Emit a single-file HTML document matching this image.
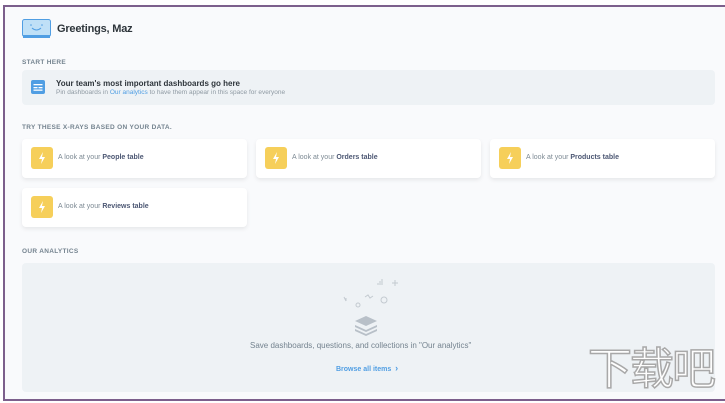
<!DOCTYPE html>
<html><head><meta charset="utf-8"><style>
*{margin:0;padding:0;box-sizing:border-box}
body{width:725px;height:403px;overflow:hidden;background:#fff;font-family:"Liberation Sans",sans-serif;position:relative}
.frame{position:absolute;left:3px;top:5px;width:730px;height:396px;border:2px solid #7c5f8c;border-right:none;background:#f9fafc}
.abs{position:absolute}
.lbl{position:absolute;left:22px;font-size:6.5px;font-weight:bold;color:#74838f;letter-spacing:.3px}
.card{position:absolute;width:225px;height:39px;background:#fff;border-radius:4px;box-shadow:0 2px 4px rgba(0,0,0,.08)}
.card .ic{position:absolute;left:9px;top:8px;width:22px;height:22px;background:#f6cf5a;border-radius:3px}
.card .ic svg{position:absolute;left:7px;top:5px}
.card .t{position:absolute;left:36px;top:15px;font-size:7px;color:#7d8a94}
.card .t b{color:#4c5773;font-weight:bold}
</style></head><body>
<div class="frame"></div>
<svg class="abs" style="left:22px;top:19px" width="29" height="20" viewBox="0 0 29 20"><rect x="0.5" y="0.5" width="28" height="17" rx="2" fill="#bfe0f7" stroke="#509ee3"/><rect x="1" y="16" width="27" height="3" fill="#509ee3"/><path d="M10 9 q4.5 4 9 0" stroke="#509ee3" fill="none" stroke-width="1"/><circle cx="9" cy="6" r=".8" fill="#509ee3"/><circle cx="20" cy="6" r=".8" fill="#509ee3"/></svg>
<div class="abs" style="left:57px;top:23px;font-size:11px;font-weight:bold;color:#2e353b;letter-spacing:-.2px">Greetings, Maz</div>
<div class="lbl" style="top:59px">START HERE</div>
<div class="abs" style="left:22px;top:70px;width:693px;height:35px;background:#eef2f5;border-radius:4px"></div>
<svg class="abs" style="left:31px;top:80px" width="14" height="14" viewBox="0 0 14 14"><rect x="0" y="0" width="14" height="14" rx="2" fill="#509ee3"/><rect x="2.5" y="4" width="9" height="1.3" fill="#fff"/><rect x="2.5" y="7" width="4" height="1.3" fill="#fff"/><rect x="7.5" y="7" width="4" height="1.3" fill="#fff"/><rect x="2.5" y="9.5" width="9" height="1.3" fill="#fff"/></svg>
<div class="abs" style="left:56px;top:79px;font-size:8px;font-weight:bold;color:#2e353b">Your team's most important dashboards go here</div>
<div class="abs" style="left:56px;top:89px;font-size:6.5px;color:#8f9aa3">Pin dashboards in <span style="color:#509ee3">Our analytics</span> to have them appear in this space for everyone</div>
<div class="lbl" style="top:124px">TRY THESE X-RAYS BASED ON YOUR DATA.</div>
<div class="card" style="left:22px;top:139px"><div class="ic"><svg width="8" height="12" viewBox="0 0 8 12"><path d="M5 0 L1 7 H4 L3 12 L7 5 H4 Z" fill="#fff"/></svg></div><div class="t">A look at your <b>People table</b></div></div>
<div class="card" style="left:256px;top:139px"><div class="ic"><svg width="8" height="12" viewBox="0 0 8 12"><path d="M5 0 L1 7 H4 L3 12 L7 5 H4 Z" fill="#fff"/></svg></div><div class="t">A look at your <b>Orders table</b></div></div>
<div class="card" style="left:490px;top:139px"><div class="ic"><svg width="8" height="12" viewBox="0 0 8 12"><path d="M5 0 L1 7 H4 L3 12 L7 5 H4 Z" fill="#fff"/></svg></div><div class="t">A look at your <b>Products table</b></div></div>
<div class="card" style="left:22px;top:188px"><div class="ic"><svg width="8" height="12" viewBox="0 0 8 12"><path d="M5 0 L1 7 H4 L3 12 L7 5 H4 Z" fill="#fff"/></svg></div><div class="t">A look at your <b>Reviews table</b></div></div>
<div class="lbl" style="top:248px">OUR ANALYTICS</div>
<div class="abs" style="left:22px;top:263px;width:693px;height:129px;background:#eef2f5;border-radius:4px"></div>
<svg class="abs" style="left:340px;top:275px" width="60" height="60" viewBox="0 0 60 60" fill="none" stroke="#c3cad0" stroke-width="1"><path d="M38 10v-2M40 10v-4M42 10v-6"/><path d="M52 8h6M55 5v6"/><path d="M4 22l2 4M6 26v-3"/><path d="M25 22l3 -2 2 3 3 -2"/><circle cx="18" cy="30" r="2"/><circle cx="44" cy="25" r="3"/></svg>
<svg class="abs" style="left:355px;top:316px" width="22" height="20" viewBox="0 0 22 20"><path d="M11 0 L22 5 L11 10 L0 5Z" fill="#b8c0c8"/><path d="M0 9 L11 14 L22 9 L22 11 L11 16 L0 11Z" fill="#b8c0c8"/><path d="M0 13 L11 18 L22 13 L22 15 L11 20 L0 15Z" fill="#b8c0c8"/></svg>
<div class="abs" style="left:250px;top:341px;font-size:8px;color:#74838f">Save dashboards, questions, and collections in "Our analytics"</div>
<div class="abs" style="left:336px;top:363px;font-size:7px;font-weight:bold;color:#509ee3">Browse all items &nbsp;<span style="font-size:9px">›</span></div>
<div class="abs" style="left:588px;top:340px;font-family:'Noto Sans CJK SC',sans-serif;font-size:44px;line-height:50px;color:rgba(255,255,255,.9);-webkit-text-stroke:1.5px #a8a8a8;letter-spacing:-2px">下载吧</div>
</body></html>
